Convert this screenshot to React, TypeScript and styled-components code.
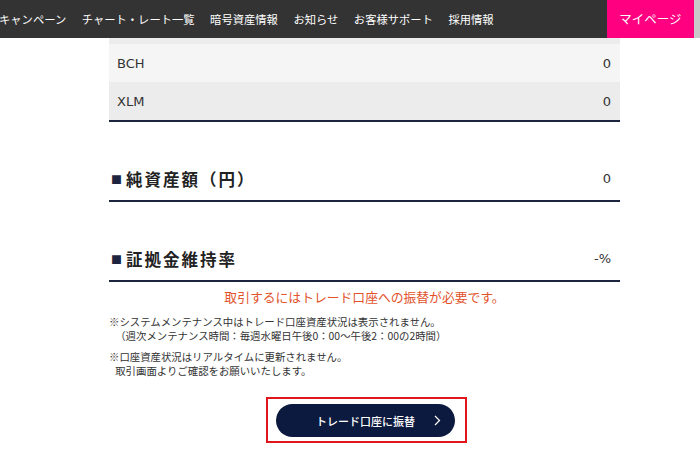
import React from "react"
import styled, { createGlobalStyle } from "styled-components"

const GlobalStyle = createGlobalStyle`
  html, body {
    margin: 0;
    padding: 0;
    background: #fff;
  }
  body {
    font-family: "DejaVu Sans", "Noto Sans CJK JP", sans-serif;
    color: #333;
    overflow: hidden;
  }
`

const navItems = [
  "キャンペーン",
  "チャート・レート一覧",
  "暗号資産情報",
  "お知らせ",
  "お客様サポート",
  "採用情報",
]

const assets = [
  { name: "LTC", value: "0" },
  { name: "BCH", value: "0" },
  { name: "XLM", value: "0" },
]

const summaries = [
  { title: "純資産額（円）", value: "0" },
  { title: "証拠金維持率", value: "-%" },
]

function Chevron() {
  return (
    <ChevronIcon width="7" height="11" viewBox="0 0 7 11" fill="none">
      <path d="M1 1l4.5 4.5L1 10" stroke="#fff" strokeWidth="1.2" />
    </ChevronIcon>
  )
}

export default function App() {
  return (
    <>
      <GlobalStyle />
      <Header>
        <Nav>
          {navItems.map(item => (
            <NavItem key={item}>{item}</NavItem>
          ))}
        </Nav>
        <MyPage>マイページ</MyPage>
        <Scrollbar />
      </Header>
      <Main>
        <Content>
          <AssetTable>
            {assets.map((a, i) => (
              <AssetRow key={a.name} striped={i % 2 === 0}>
                <span>{a.name}</span>
                <span>{a.value}</span>
              </AssetRow>
            ))}
          </AssetTable>

          {summaries.map(s => (
            <Summary key={s.title}>
              <SummaryRow>
                <SummaryTitle>
                  <Square>■</Square>
                  {s.title}
                </SummaryTitle>
                <SummaryValue>{s.value}</SummaryValue>
              </SummaryRow>
            </Summary>
          ))}

          <Warning>取引するにはトレード口座への振替が必要です。</Warning>

          <Note>
            ※システムメンテナンス中はトレード口座資産状況は表示されません。
            <NoteIndent>（週次メンテナンス時間：毎週水曜日午後0：00～午後2：00の2時間）</NoteIndent>
          </Note>
          <Note>
            ※口座資産状況はリアルタイムに更新されません。
            <NoteIndent>取引画面よりご確認をお願いいたします。</NoteIndent>
          </Note>

          <ButtonArea>
            <Highlight>
              <TransferButton>
                トレード口座に振替
                <Chevron />
              </TransferButton>
            </Highlight>
          </ButtonArea>
        </Content>
      </Main>
    </>
  )
}

const Header = styled.header`
  display: flex;
  height: 38px;
  background: #333333;
`

const Nav = styled.nav`
  flex: 1;
  display: flex;
  align-items: center;
  gap: 15.5px;
  margin-left: -1px;
  overflow: hidden;
`

const NavItem = styled.a`
  color: #fff;
  font-family: "Noto Sans CJK JP", sans-serif;
  font-size: 11.3px;
  line-height: 16px;
  white-space: nowrap;
  text-decoration: none;
`

const MyPage = styled.a`
  width: 87px;
  display: flex;
  align-items: center;
  justify-content: center;
  background: #ff0080;
  color: #fff;
  font-family: "Noto Sans CJK JP", sans-serif;
  font-size: 12.5px;
  line-height: 16px;
`

const Scrollbar = styled.div`
  width: 6px;
  background: #c9c9c9;
`

const Main = styled.main`
  overflow: hidden;
  height: 433px;
`

const Content = styled.div`
  width: 511px;
  margin-left: 109px;
`

const AssetTable = styled.div`
  margin-top: -32px;
  border-bottom: 2px solid #1c2440;
`

const AssetRow = styled.div<{ striped: boolean }>`
  height: 38px;
  display: flex;
  align-items: center;
  justify-content: space-between;
  padding: 0 9px 0 8px;
  background: ${props => (props.striped ? "#ececec" : "#f5f5f5")};
  font-size: 13px;
  color: #333;
`

const Summary = styled.section`
  padding-top: 42px;
`

const SummaryRow = styled.div`
  box-sizing: border-box;
  height: 38px;
  display: flex;
  align-items: center;
  justify-content: space-between;
  padding: 0 9px 7px 2px;
  border-bottom: 2px solid #1c2440;
`

const SummaryTitle = styled.h3`
  margin: 0;
  display: flex;
  align-items: center;
  font-family: "Noto Sans CJK JP", sans-serif;
  font-size: 16.5px;
  font-weight: 700;
  letter-spacing: 2px;
  color: #222;
`

const Square = styled.span`
  font-size: 11px;
  letter-spacing: 0;
  margin-right: 4px;
  color: #1c2440;
`

const SummaryValue = styled.span`
  font-size: 13px;
  color: #333;
`

const Warning = styled.p`
  margin: 6px 0 0;
  text-align: center;
  font-family: "Noto Sans CJK JP", sans-serif;
  font-size: 12.8px;
  line-height: 18px;
  color: #e2522b;
`

const Note = styled.p`
  margin: 9px 0 0;
  font-family: "Noto Sans CJK JP", sans-serif;
  font-size: 10.4px;
  line-height: 14px;
  color: #333;
  white-space: nowrap;

  & + & {
    margin-top: 7px;
  }
`

const NoteIndent = styled.span`
  display: block;
  padding-left: 0.6em;
`

const ButtonArea = styled.div`
  display: flex;
  justify-content: center;
  margin-top: 19px;
  padding-left: 4px;
`

const Highlight = styled.div`
  border: 2px solid #e0161d;
  padding: 5px 10px 4px 8px;
`

const TransferButton = styled.button`
  position: relative;
  width: 179px;
  height: 33px;
  border: none;
  border-radius: 17px;
  background: #0d1a40;
  color: #fff;
  font-family: "Noto Sans CJK JP", sans-serif;
  font-size: 11px;
  font-weight: 500;
  cursor: pointer;
`

const ChevronIcon = styled.svg`
  position: absolute;
  right: 14px;
  top: 11px;
`
